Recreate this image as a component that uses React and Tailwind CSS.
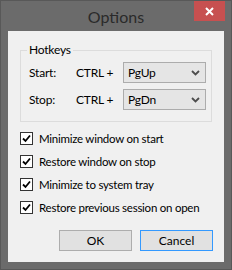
import React, { useState } from 'react'

const font = { fontFamily: 'Lato, "Liberation Sans", Arial, sans-serif' }

const Chevron = () => (
  <svg width="9" height="6" viewBox="0 0 9 6" className="shrink-0">
    <path d="M1 1 L4.5 4.5 L8 1" fill="none" stroke="#4d4d4d" strokeWidth="1.8" />
  </svg>
)

const Select = ({ value }) => (
  <div className="w-[83px] h-[21px] flex items-center justify-between pl-[4px] pr-[5px] bg-[#e5e5e5] border border-[#acacac] text-[12px] text-black">
    <span>{value}</span>
    <Chevron />
  </div>
)

const Check = ({ label, checked, onToggle }) => (
  <div className="flex items-center gap-[6px] h-[13px] cursor-default whitespace-nowrap" onClick={onToggle}>
    <div className="w-[13px] h-[13px] shrink-0 border border-[#333333] bg-white flex items-center justify-center">
      {checked && (
        <svg width="9" height="9" viewBox="0 0 9 9">
          <path d="M1 4.5 L3.5 7 L8 1.5" fill="none" stroke="#000" strokeWidth="1.8" />
        </svg>
      )}
    </div>
    <span className="text-[11.5px] tracking-[-0.25px] text-black leading-none">{label}</span>
  </div>
)

const App = () => {
  const [opts, setOpts] = useState({
    minStart: true,
    restoreStop: true,
    tray: true,
    session: true,
  })

  const toggle = (key) => setOpts({ ...opts, [key]: !opts[key] })

  return (
    <div className="w-[232px] h-[270px] bg-[#6b6b6b] border border-[#585858] flex flex-col" style={font}>
      {/* Заголовок */}
      <div className="relative h-[30px] shrink-0 flex items-center justify-center">
        <span className="text-[16px] text-[#2a2a2a] mt-[1px]">Options</span>
        <div className="absolute top-0 right-[6px] w-[31px] h-[20px] bg-[#c75050] flex items-center justify-center">
          <svg width="9" height="9" viewBox="0 0 9 9">
            <path d="M1 1 L8 8 M8 1 L1 8" stroke="#fff" strokeWidth="2" />
          </svg>
        </div>
      </div>

      {/* Клиентская область */}
      <div className="flex-1 mx-[7px] mb-[7px] bg-[#f0f0f0] flex flex-col px-[12px] pt-[19px]">
        <div className="relative border border-[#dcdcdc] pt-[11px] pb-[11px] pl-[8px] pr-[5px] flex flex-col gap-[6px]">
          <span className="absolute -top-[8px] left-[6px] px-[2px] bg-[#f0f0f0] text-[12px] tracking-[-0.2px] text-black leading-[14px]">
            Hotkeys
          </span>
          <div className="flex items-center text-[12px] tracking-[-0.2px] text-black whitespace-nowrap">
            <span className="w-[47px]">Start:</span>
            <span className="w-[47px]">CTRL +</span>
            <Select value="PgUp" />
          </div>
          <div className="flex items-center text-[12px] tracking-[-0.2px] text-black whitespace-nowrap">
            <span className="w-[47px]">Stop:</span>
            <span className="w-[47px]">CTRL +</span>
            <Select value="PgDn" />
          </div>
        </div>

        <div className="flex flex-col gap-[10px] mt-[10px]">
          <Check label="Minimize window on start" checked={opts.minStart} onToggle={() => toggle('minStart')} />
          <Check label="Restore window on stop" checked={opts.restoreStop} onToggle={() => toggle('restoreStop')} />
          <Check label="Minimize to system tray" checked={opts.tray} onToggle={() => toggle('tray')} />
          <Check label="Restore previous session on open" checked={opts.session} onToggle={() => toggle('session')} />
        </div>

        <div className="flex justify-end gap-[8px] mt-[16px] -mr-[1px]">
          <button className="w-[73px] h-[21px] bg-[#e1e1e1] border border-[#adadad] text-[12px] text-black">
            OK
          </button>
          <button className="w-[73px] h-[21px] bg-[#e1e1e1] border border-[#3399ff] text-[12px] text-black">
            Cancel
          </button>
        </div>
      </div>
    </div>
  )
}

export default App
